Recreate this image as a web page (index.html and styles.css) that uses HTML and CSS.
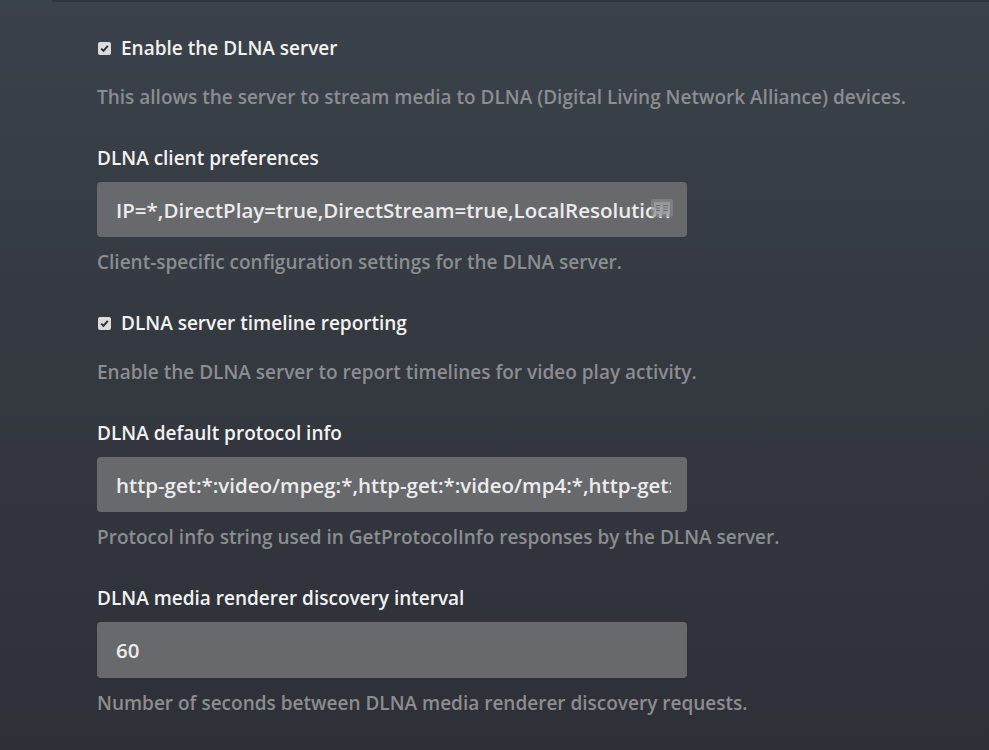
FILE: index.html
```html
<!DOCTYPE html>
<html lang="en">
<head>
    <meta charset="UTF-8">
    <meta name="viewport" content="width=device-width, initial-scale=1.0">
    <title>DLNA Settings</title>
    <link rel="stylesheet" href="styles.css">
</head>
<body>
    <div class="top-edge"></div>
    <main class="settings">
        <div class="setting">
            <label class="check-label">
                <span class="check-box">
                    <svg viewBox="0 0 13 13" width="13" height="13"><path d="M3.2 6.6 L5.5 8.9 L9.8 3.8" fill="none" stroke="#2b2d31" stroke-width="1.9"/></svg>
                </span>
                Enable the DLNA server
            </label>
            <p class="hint check-hint">This allows the server to stream media to DLNA (Digital Living Network Alliance) devices.</p>
        </div>

        <div class="setting">
            <label class="field-label" for="clientPrefs">DLNA client preferences</label>
            <div class="field">
                <input id="clientPrefs" class="text-input" type="text" value="IP=*,DirectPlay=true,DirectStream=true,LocalResolution=true" readonly>
                <span class="field-icon">
                    <svg viewBox="0 0 22 18" width="22" height="18">
                        <rect x="0" y="0" width="22" height="18" rx="2" fill="#8a8c8f" fill-opacity="0.6"/>
                        <rect x="3" y="3" width="16" height="12" fill="#9d9fa2" fill-opacity="0.8"/>
                        <path d="M5 6.5 H9 M5 9 H9 M5 11.5 H9 M12 6.5 H17 M12 9 H17 M12 11.5 H17" stroke="#6c6e72" stroke-width="1.2"/>
                    </svg>
                </span>
            </div>
            <p class="hint">Client-specific configuration settings for the DLNA server.</p>
        </div>

        <div class="setting">
            <label class="check-label">
                <span class="check-box">
                    <svg viewBox="0 0 13 13" width="13" height="13"><path d="M3.2 6.6 L5.5 8.9 L9.8 3.8" fill="none" stroke="#2b2d31" stroke-width="1.9"/></svg>
                </span>
                DLNA server timeline reporting
            </label>
            <p class="hint check-hint">Enable the DLNA server to report timelines for video play activity.</p>
        </div>

        <div class="setting">
            <label class="field-label" for="protocolInfo">DLNA default protocol info</label>
            <div class="field">
                <input id="protocolInfo" class="text-input" type="text" value="http-get:*:video/mpeg:*,http-get:*:video/mp4:*,http-get:*:video/vnd.dlna.mpeg-tts:*" readonly>
            </div>
            <p class="hint">Protocol info string used in GetProtocolInfo responses by the DLNA server.</p>
        </div>

        <div class="setting">
            <label class="field-label" for="discovery">DLNA media renderer discovery interval</label>
            <div class="field">
                <input id="discovery" class="text-input tall" type="text" value="60" readonly>
            </div>
            <p class="hint">Number of seconds between DLNA media renderer discovery requests.</p>
        </div>
    </main>
</body>
</html>
```

FILE: styles.css
```css
html, body {
    height: 100%;
}
body {
    margin: 0;
    padding: 0;
    font-family: "Open Sans", "Noto Sans", sans-serif;
    font-weight: 600;
    font-size: 19px;
    color: #eeeeee;
    background: linear-gradient(180deg, #3a424b 0%, #34383f 50%, #2e3038 100%);
    overflow: hidden;
}
.top-edge {
    height: 2px;
    margin-left: 52px;
    background-color: #2f353c;
}
.settings {
    padding: 34px 0 0 97px;
    width: 590px;
}
.setting {
    margin-bottom: 37px;
}
.check-label {
    display: flex;
    align-items: center;
    gap: 10px;
    line-height: 24px;
    color: #f2f2f2;
    padding-left: 1px;
}
.check-box {
    display: inline-flex;
    width: 13px;
    height: 13px;
    border-radius: 2px;
    background-color: #dcdcdc;
}
.field-label {
    display: block;
    line-height: 24px;
    color: #f2f2f2;
    margin-bottom: 12px;
}
.field {
    position: relative;
}
.text-input {
    display: block;
    box-sizing: border-box;
    width: 590px;
    height: 55px;
    padding: 0 16px 0 19px;
    border: none;
    border-radius: 4px;
    background-color: #67696d;
    color: #ececec;
    font-family: "Open Sans", "Noto Sans", sans-serif;
    font-weight: 600;
    font-size: 20.5px;
    outline: none;
}
.text-input.tall {
    height: 56px;
}
.field-icon {
    position: absolute;
    right: 14px;
    top: 17px;
    display: flex;
}
.hint {
    margin: 13px 0 0;
    line-height: 24px;
    color: #8b8d91;
    white-space: nowrap;
}
.check-hint {
    margin-top: 25px;
}
```
